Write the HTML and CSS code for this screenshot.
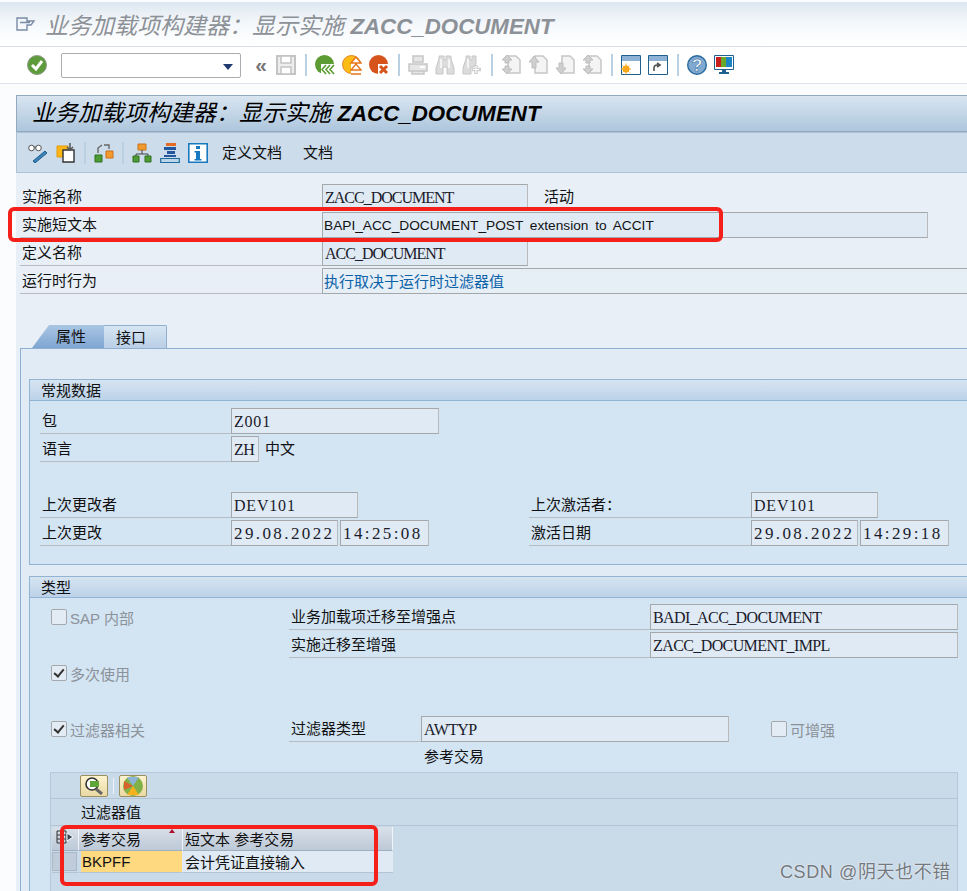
FILE: index.html
```html
<!DOCTYPE HTML>
<html>
<head>
<meta charset="utf-8">
<title>业务加载项构建器</title>
<link rel="stylesheet" href="styles.css">
</head>
<body>
  <div class="titlebar">
    <svg class="menuicon" width="20" height="14" viewBox="0 0 20 14"><path d="M1 1h10v3h7l-3 4h-4v5H1zM4 5.500h10" fill="none" stroke="#7a8ba5" stroke-width="1.400"/></svg>
    <span class="title-text">业务加载项构建器&#xFF1A;显示实施 <b>ZACC_DOCUMENT</b></span>
  </div>

  <div class="systb">
    <svg class="ic" viewBox="0 0 20 20"><circle cx="10" cy="10" r="9.500" fill="#5d9b3b" stroke="#8c9a88"/><path d="M5 10l4 4 6-8" fill="none" stroke="#fff" stroke-width="3"/></svg>
    <div class="combo"><span class="combo-arrow"></span></div>
    <span class="dbl">«</span>
    <svg class="ic" viewBox="0 0 20 20"><path d="M1 1h18v18H1z" fill="#eee" stroke="#c4c4c4" stroke-width="2"/><path d="M5 1h10v7H5zM5 12h10v7H5z" fill="#fff" stroke="#c4c4c4" stroke-width="1.500"/></svg>
    <span class="sep"></span>
    <svg class="ic" viewBox="0 0 20 20"><circle cx="9.500" cy="9.500" r="9.500" fill="#5c9c32"/><path d="M6 9h14v11H6z" fill="#fff"/><path d="M11 10l-4 4.500 4 4.500M15 10l-4 4.500 4 4.500M19 10l-4 4.500 4 4.500" fill="none" stroke="#5c9c32" stroke-width="1.600"/></svg>
    <svg class="ic" viewBox="0 0 20 20"><circle cx="9.500" cy="9.500" r="9" fill="#fcbc14" stroke="#e8831c"/><path d="M9 8h11v12H9z" fill="#fff"/><path d="M14 2l-5 6h10zM14 9l-5 6h10zM9 19h10" fill="#fff" stroke="#e8751a" stroke-width="1.400"/></svg>
    <svg class="ic" viewBox="0 0 20 20"><circle cx="9.500" cy="9.500" r="9.500" fill="#d6541c"/><path d="M9 9h11v11H9z" fill="#fff"/><path d="M11 11l7 7M18 11l-7 7" stroke="#d6541c" stroke-width="3"/></svg>
    <span class="sep"></span>
    <svg class="ic" viewBox="0 0 20 20"><path d="M5 1h10v6H5zM1 9h18v7H1zM4 16h12v3H4z" fill="#e6e6e6" stroke="#c6c6c6" stroke-width="1.500"/><path d="M12 12h5" stroke="#fff" stroke-width="2"/></svg>
    <svg class="ic" viewBox="0 0 20 20"><path d="M4 1h5v4h2V1h5v3l3 9v6h-7v-7H8v7H1v-6l3-9z" fill="#dcdcdc" stroke="#c6c6c6"/><path d="M6 4v9M14 4v9" stroke="#f4f4f4" stroke-width="2"/></svg>
    <svg class="ic" viewBox="0 0 20 20"><path d="M4 1h4v4h2V1h4v8l-3 3H9v7H1v-6l3-9z" fill="#dcdcdc" stroke="#c6c6c6"/><path d="M6 4v9" stroke="#f4f4f4" stroke-width="2"/><path d="M14 10v9M10 14.500h9" stroke="#cfcfcf" stroke-width="3.500"/><path d="M14 11v7M11 14.500h6" stroke="#fff" stroke-width="1.200"/></svg>
    <span class="sep"></span>
    <svg class="ic" viewBox="0 0 20 20"><path d="M7 1h8l4 4v13H7z" fill="#f4f4f4" stroke="#c6c6c6" stroke-width="1.500"/><path d="M6 0L1 5h3v3h4V5h3zM6 19l-5-5h3v-3h4v3h3z" fill="#cfcfcf" stroke="#bdbdbd"/></svg>
    <svg class="ic" viewBox="0 0 20 20"><path d="M7 1h8l4 4v13H7z" fill="#f4f4f4" stroke="#c6c6c6" stroke-width="1.500"/><path d="M6 1L1 7h3v6h4V7h3z" fill="#cfcfcf" stroke="#bdbdbd"/></svg>
    <svg class="ic" viewBox="0 0 20 20"><path d="M7 1h8l4 4v13H7z" fill="#f4f4f4" stroke="#c6c6c6" stroke-width="1.500"/><path d="M6 19L1 13h3V8h4v5h3z" fill="#cfcfcf" stroke="#bdbdbd"/></svg>
    <svg class="ic" viewBox="0 0 20 20"><path d="M7 1h8l4 4v13H7z" fill="#f4f4f4" stroke="#c6c6c6" stroke-width="1.500"/><path d="M6 0L1 5h3v3h4V5h3zM6 19l-5-5h3v-3h4v3h3z" fill="#cfcfcf" stroke="#bdbdbd"/></svg>
    <span class="sep"></span>
    <svg class="ic" viewBox="0 0 20 20"><path d="M.500.500h19v19H.500z" fill="#fff" stroke="#20608f"/><path d="M1 1h18v5H1z" fill="#8eb1d6"/><circle cx="5" cy="14" r="3.500" fill="#f8a81c"/><path d="M5 8.500v11M0 14h10M1.500 10.500l7 7M8.500 10.500l-7 7" stroke="#f8a81c"/></svg>
    <svg class="ic" viewBox="0 0 20 20"><path d="M.500.500h19v19H.500z" fill="#fff" stroke="#20608f"/><path d="M1 1h18v5H1z" fill="#8eb1d6"/><path d="M6 16v-3c0-2 1-3 3-3h2M9 8l3 2-3 2" fill="none" stroke="#555" stroke-width="1.600"/></svg>
    <span class="sep"></span>
    <svg class="ic" viewBox="0 0 20 20"><circle cx="10" cy="10" r="9.300" fill="#7fa9d1" stroke="#2a6b9c" stroke-width="1.400"/><text x="10" y="15.500" class="ic-q">?</text></svg>
    <svg class="ic" viewBox="0 0 20 20"><path d="M.500.500h19v14H.500z" fill="#fff" stroke="#20608f"/><path d="M2 2h5v10H2z" fill="#c81e1e"/><path d="M7 2h5v10H7z" fill="#6aa82a"/><path d="M12 2h6v10h-6z" fill="#1d84c6"/><path d="M8 15h4v2H8zM5 17h10v2H5z" fill="#20608f"/></svg>
  </div>

  <div class="main">
    <div class="appbar">业务加载项构建器&#xFF1A;显示实施 <b>ZACC_DOCUMENT</b></div>
    <div class="apptb">
      <svg class="ic" viewBox="0 0 20 20"><circle cx="3.500" cy="5" r="2.800" fill="#fff" stroke="#555"/><circle cx="10.500" cy="5" r="2.800" fill="#fff" stroke="#555"/><path d="M6 4h2" stroke="#555"/><path d="M5 18l12-10 2 2-12 10z" fill="#3b82b6" stroke="#1f5f8f"/></svg>
      <svg class="ic" viewBox="0 0 20 20"><path d="M1 3h11v11H1z" fill="#fbb615" stroke="#e39c10"/><path d="M7 7h11v12H7z" fill="#fff" stroke="#333" stroke-width="1.400"/><path d="M14 0v6M11 4l3 3 3-3" fill="none" stroke="#555" stroke-width="1.500"/></svg>
      <span class="sep sep-app"></span>
      <svg class="ic" viewBox="0 0 20 20"><path d="M1 12h7v7H1z" fill="#4e9a34" stroke="#2f7020"/><path d="M12 8h7v7h-7z" fill="#f39a2e" stroke="#c8701a"/><path d="M4 10V5l4-3M10 2h5v4" fill="none" stroke="#666" stroke-width="1.400"/></svg>
      <span class="sep sep-app"></span>
      <svg class="ic" viewBox="0 0 20 20"><path d="M6 1h8v6H6z" fill="#f39a2e" stroke="#c8701a"/><path d="M10 7v4M4 13v-2h12v2" fill="none" stroke="#444"/><path d="M1 13h6v6H1zM13 13h6v6h-6z" fill="#4e9a34" stroke="#2f7020"/></svg>
      <svg class="ic" viewBox="0 0 20 20"><path d="M6 0h10v3H6z" fill="#e56a24"/><path d="M4 4h12v3H4zM7 8h8v3H7zM4 12h12v2H4z" fill="#23579e"/><path d="M.700 15.500h18.600v4H.700z" fill="#bcd7ec" stroke="#1e6a9d" stroke-width="1.200"/></svg>
      <svg class="ic" viewBox="0 0 20 20"><path d="M.800.800h18.400v18.400H.800z" fill="#fff" stroke="#1878c0" stroke-width="1.600"/><path d="M8 3h4v3H8zM6.500 8H12v8h1.500v1.500h-7V16H8V9.500H6.500z" fill="#1878c0"/></svg>
      <span class="tb-text tb-first">定义文档</span>
      <span class="tb-text">文档</span>
    </div>

    <div class="head">
      <div class="hrow"><span class="lbl">实施名称</span><span class="fld fld-mono fld-tight w206">ZACC_DOCUMENT</span><span class="state">活动</span></div>
      <div class="hrow"><span class="lbl">实施短文本</span><span class="fld fld-short w606">BAPI_ACC_DOCUMENT_POST extension to ACCIT</span></div>
      <div class="hrow"><span class="lbl">定义名称</span><span class="fld fld-mono fld-tight w206">ACC_DOCUMENT</span></div>
      <div class="hrow"><span class="lbl">运行时行为</span><span class="fld fld-link wfull">执行取决于运行时过滤器值</span></div>
    </div>

    <div class="tabs">
      <span class="tab tab-on">属性</span>
      <span class="tab tab-off">接口</span>
    </div>

    <div class="panel">
      <div class="group group-first">
        <div class="group-hd">常规数据</div>
        <div class="group-bd">
          <div class="frow"><span class="lbl">包</span><div class="flds"><span class="fld fld-mono fld-code w207">Z001</span></div></div>
          <div class="frow"><span class="lbl">语言</span><div class="flds"><span class="fld fld-mono w28">ZH</span><span class="plain">中文</span></div></div>
          <div class="frow"></div>
          <div class="frow"><span class="lbl">上次更改者</span><div class="flds"><span class="fld fld-mono fld-code w127">DEV101</span></div><span class="lbl">上次激活者&#xFF1A;</span><div class="flds"><span class="fld fld-mono fld-code w127">DEV101</span></div></div>
          <div class="frow"><span class="lbl">上次更改</span><div class="flds"><span class="fld fld-mono fld-num w107">29.08.2022</span><span class="fld fld-mono fld-num w89">14:25:08</span></div><span class="lbl">激活日期</span><div class="flds"><span class="fld fld-mono fld-num w107">29.08.2022</span><span class="fld fld-mono fld-num w89">14:29:18</span></div></div>
        </div>
      </div>

      <div class="group">
        <div class="group-hd">类型</div>
        <div class="group-bd group-bd-type">
          <div class="trow"><label class="chk"><span class="box"></span>SAP 内部</label><span class="lbl">业务加载项迁移至增强点</span><span class="fld fld-mono w308">BADI_ACC_DOCUMENT</span></div>
          <div class="trow"><span></span><span class="lbl">实施迁移至增强</span><span class="fld fld-mono w308">ZACC_DOCUMENT_IMPL</span></div>
          <div class="trow"><label class="chk"><span class="box box-on"></span>多次使用</label></div>
          <div class="trow"></div>
          <div class="trow trow-filter"><label class="chk"><span class="box box-on"></span>过滤器相关</label><span class="lbl">过滤器类型</span><span class="fld fld-mono w308">AWTYP</span><label class="chk chk-end"><span class="box"></span>可增强</label></div>
          <div class="trow trow-filter"><span></span><span></span><span class="plain plain-note">参考交易</span></div>

          <div class="values">
            <div class="values-tb">
              <span class="vbtn"><svg width="20" height="18" viewBox="0 0 20 18"><circle cx="8" cy="7" r="6" fill="#fff" stroke="#333" stroke-width="1.600"/><path d="M6 4h9v6H6z" fill="#5ea63a"/><path d="M12 12l6 5" stroke="#666" stroke-width="3"/></svg></span>
              <span class="vsep"></span>
              <span class="vbtn"><svg width="20" height="20" viewBox="0 0 20 20"><circle cx="10" cy="10" r="10" fill="#7fb04a"/><path d="M10 10L4 1h12z" fill="#8fb3d6"/><path d="M10 10L1 14V5z" fill="#d9602a"/><path d="M10 10l-6 9h12z" fill="#f5b21e"/></svg></span>
            </div>
            <div class="values-title">过滤器值</div>
            <table class="grid">
              <tr class="grid-head"><th class="sel"><svg width="18" height="14" viewBox="0 0 18 14"><path d="M1 1h9v12H1zM1 5h9M1 9h9M5 1v12" fill="none" stroke="#333"/><path d="M11 3l6 4-6 4z" fill="#345" stroke="#fff"/></svg></th><th class="c1">参考交易<span class="sortmark"></span></th><th class="c2">短文本 参考交易</th></tr>
              <tr class="grid-row"><td class="sel"><span class="selbtn"></span></td><td class="c1 cell-key">BKPFF</td><td class="c2 cell-txt">会计凭证直接输入</td></tr>
            </table>
          </div>
        </div>
      </div>
    </div>
  </div>

  <div class="mark mark-a"></div>
  <div class="mark mark-b"></div>
  <div class="watermark">CSDN @阴天也不错</div>
</body>
</html>
```

FILE: styles.css
```css
html,body{
  margin: 0;
  height: 891px;
  overflow: hidden;
  background: #fbfcfe;
  font-family: "Liberation Sans", "Noto Sans CJK SC", sans-serif;
  font-size: 15px;
  color: #111;
}
body{
  position: relative;
  width: 967px;
}
.titlebar{
  height: 45px;
  margin-top: 2px;
  display: flex;
  align-items: center;
  padding-left: 16px;
  background: linear-gradient(#dde7f1, #f5f8fb 50%, #fff);
  border-bottom: 1px solid #d8dee5;
  box-sizing: border-box;
}
.menuicon{ margin-right: 9px; }
.title-text{
  font-size: 23px;
  font-style: italic;
  color: #8c9197;
  white-space: nowrap;
}
.title-text b,.appbar b{ font-size: 22.300px; }
.systb{
  height: 37px;
  box-sizing: border-box;
  display: flex;
  align-items: center;
  padding-left: 27px;
  gap: 7px;
  background: #fff;
  border-bottom: 1px solid #dfe4ea;
}
.ic{
  width: 20px;
  height: 20px;
  flex: none;
}
.ic-q{
  font-size: 17px;
  font-weight: bold;
  fill: #fff;
  stroke: #2a6b9c;
  stroke-width: .5px;
  text-anchor: middle;
}
.combo{
  width: 180px;
  height: 25px;
  margin-left: 7px;
  box-sizing: border-box;
  border: 1px solid #a9acb0;
  border-radius: 2px;
  background: #fff;
  position: relative;
}
.combo-arrow{
  position: absolute;
  right: 7px;
  top: 10px;
  border-top: 6px solid #1f3a6e;
  border-left: 5px solid transparent;
  border-right: 5px solid transparent;
}
.dbl{
  width: 16px;
  margin-left: 5px;
  font-size: 21px;
  line-height: 20px;
  font-weight: bold;
  color: #777;
  text-align: center;
}
.sep{
  width: 2px;
  height: 22px;
  margin: 0 1px 0 2px;
  background: #b9cfe2;
  flex: none;
}
.main{
  margin: 11px 0 0 16px;
  height: 796px;
  background: #e8eff7;
}
.appbar{
  height: 37px;
  box-sizing: border-box;
  padding-left: 15px;
  border: 1px solid #93a9c0;
  border-right: 0;
  line-height: 34px;
  font-size: 23px;
  font-style: italic;
  color: #000;
  white-space: nowrap;
  background: linear-gradient(#d9e5f0, #adc6dd);
}
.apptb{
  height: 41px;
  box-sizing: border-box;
  display: flex;
  align-items: center;
  gap: 8px;
  padding-left: 11px;
  background: #ccdcea;
  border: 1px solid #aec2d6;
  border-right: 0;
}
.sep-app{ margin: 0; }
.tb-text{
  margin-left: 13px;
  line-height: 36px;
}
.tb-first{ margin-left: 6px; }
.head{ padding-top: 11px; }
.hrow{
  height: 26px;
  margin-bottom: 2px;
  display: flex;
  padding-left: 4px;
}
.lbl{
  box-sizing: border-box;
  height: 26px;
  line-height: 26px;
  padding-left: 2px;
  border-bottom: 1px solid #b6bcc2;
  white-space: nowrap;
  overflow: hidden;
}
.hrow .lbl{ width: 302px; }
.fld{
  box-sizing: border-box;
  height: 26px;
  line-height: 26px;
  padding-left: 1px;
  border: 1px solid #a5a8ab;
  border-right-color: #b8babc;
  background: #dfeaf4;
  white-space: nowrap;
  overflow: hidden;
  flex: none;
  font-size: 14.100px;
}
.fld-short{
  font-size: 13.700px;
  word-spacing: 3px;
}
.fld-mono{
  font-family: "Liberation Serif", serif;
  font-size: 16px;
  letter-spacing: -.6px;
  padding-left: 2px;
  color: #1b1b2b;
}
.fld-tight{ letter-spacing: -1px; }
.fld-code{ letter-spacing: .8px; }
.fld-num{
  font-size: 17px;
  letter-spacing: 2.400px;
}
.fld-link{
  color: #0a62a8;
  font-size: 15px;
  background: #e6eef6;
}
.state{
  margin-left: 16px;
  line-height: 26px;
}
.w206{ width: 206px; }
.w606{ width: 606px; }
.wfull{ width: 645px; border-right: 0; }
.w207{ width: 208px; }
.w28{ width: 28px; }
.w127{ width: 127px; }
.w107{ width: 107px; }
.w89{ width: 89px; }
.w308{ width: 308px; }
.tabs{
  display: flex;
  height: 23px;
  margin-top: 31px;
  padding-left: 16px;
}
.tab{
  box-sizing: border-box;
  height: 23px;
  line-height: 24px;
}
.tab-on{
  width: 72px;
  padding-left: 24px;
  background: linear-gradient(#a9c5e3, #7fa6d2);
  clip-path: polygon(0 100%, 17px 0, 100% 0, 100% 100%);
}
.tab-off{
  width: 63px;
  padding-left: 12px;
  background: linear-gradient(#d7e5f3, #b9cfe6);
  border: 1px solid #8fb0d0;
  border-bottom: 0;
  border-left: 0;
  border-radius: 0 2px 0 0;
}
.panel{
  margin-left: 4px;
  height: 544px;
  padding: 30px 0 0 8px;
  box-sizing: border-box;
  background: #e0ebf6;
  border: 1px solid #8fb0d0;
  border-right: 0;
  border-bottom: 0;
}
.group{
  width: 960px;
  margin-bottom: 11px;
  border: 1px solid #93b3d3;
  border-right: 0;
  border-bottom: 0;
  background: #d3e4f3;
}
.group-first{
  height: 186px;
  box-sizing: border-box;
  border-bottom: 1px solid #93b3d3;
}
.group-hd{
  height: 21px;
  line-height: 21px;
  padding-left: 11px;
  background: linear-gradient(#d6e4f1, #bcd2e8);
  border-bottom: 1px solid #93b3d3;
  box-sizing: border-box;
}
.group-bd{ padding-top: 7px; }
.group-bd-type{ padding-top: 6px; }
.frow{
  height: 26px;
  margin-bottom: 2px;
  padding-left: 10px;
  display: grid;
  grid-template-columns: 191px 298px 222px 1fr;
}
.flds{
  display: flex;
  gap: 2px;
}
.plain{
  margin-left: 4px;
  line-height: 26px;
}
.plain-note{ margin-left: 3px; }
.trow{
  height: 26px;
  margin-bottom: 2px;
  display: grid;
  grid-template-columns: 259px 361px 308px;
}
.trow-filter{ grid-template-columns: 259px 132px 308px 1fr; }
.chk{
  display: flex;
  align-items: center;
  padding-left: 21px;
  color: #8b9299;
}
.chk-end{ padding-left: 42px; }
.box{
  box-sizing: border-box;
  width: 16px;
  height: 16px;
  margin-right: 3px;
  border: 1px solid #a5a9ad;
  border-radius: 2px;
  background: #e3ecf5;
  position: relative;
}
.box-on:after{
  content: "";
  position: absolute;
  left: 4px;
  top: 1px;
  width: 4px;
  height: 8px;
  border: solid #333;
  border-width: 0 2.500px 2.500px 0;
  transform: rotate(40deg);
}
.values{
  width: 908px;
  height: 120px;
  margin: 0 0 0 20px;
  background: #c9dae9;
  border: 1px solid #b6c9db;
  box-sizing: border-box;
}
.values-tb{
  height: 25px;
  display: flex;
  align-items: center;
  gap: 5px;
  padding-left: 29px;
  border-bottom: 1px solid #b3c5d6;
}
.vbtn{
  box-sizing: border-box;
  width: 28px;
  height: 22px;
  display: flex;
  align-items: center;
  justify-content: center;
  border: 1px solid #9a8f62;
  border-radius: 2px;
  background: linear-gradient(#fdf3cf, #ead9a3);
}
.vsep{
  width: 1px;
  height: 16px;
  background: #f0f5fa;
}
.values-title{
  height: 26px;
  line-height: 28px;
  padding-left: 30px;
  border-bottom: 1px solid #b3c5d6;
}
.grid{
  margin: 1px 0 0 1px;
  border-collapse: separate;
  border-spacing: 0;
  table-layout: fixed;
  width: 341px;
}
.grid th,.grid td{
  padding: 0 0 0 2px;
  font-weight: normal;
  text-align: left;
  box-sizing: border-box;
  white-space: nowrap;
}
.grid-head th{
  height: 24px;
  background: linear-gradient(#d9e0e9, #bdc9d7);
  border-right: 1px solid #f0f4f8;
  border-bottom: 1px solid #9fb0c0;
  position: relative;
}
.grid .sel{
  width: 27px;
  padding: 0;
  text-align: center;
}
.grid .c1{ width: 104px; }
.grid .c2{ width: 210px; }
.grid-row td{
  height: 20px;
  border-bottom: 1px solid #b4c4d4;
}
.selbtn{
  display: block;
  width: 25px;
  height: 19px;
  background: #c0ccd9;
  border: 1px solid #aab8c7;
  box-sizing: border-box;
}
.grid .cell-key{
  background: #ffd97f;
  border-left: 2px solid #c9dae9;
  border-right: 1px solid #dfeaf5;
  padding-left: 1px;
}
.cell-txt{ background: #dfeaf5; }
.sortmark{
  position: absolute;
  right: 7px;
  top: 2px;
  border-bottom: 4px solid #b01030;
  border-left: 3px solid transparent;
  border-right: 3px solid transparent;
}
.mark{
  position: absolute;
  box-sizing: border-box;
  border: 4px solid #f5201a;
  border-radius: 6px;
}
.mark-a{
  left: 8px;
  top: 207px;
  width: 715px;
  height: 35px;
}
.mark-b{
  left: 60px;
  top: 825px;
  width: 318px;
  height: 61px;
}
.watermark{
  position: absolute;
  left: 780px;
  top: 860px;
  font-size: 18px;
  line-height: 24px;
  letter-spacing: .6px;
  color: #74797e;
  text-shadow: 0 0 2px #fff;
  white-space: nowrap;
}
```
